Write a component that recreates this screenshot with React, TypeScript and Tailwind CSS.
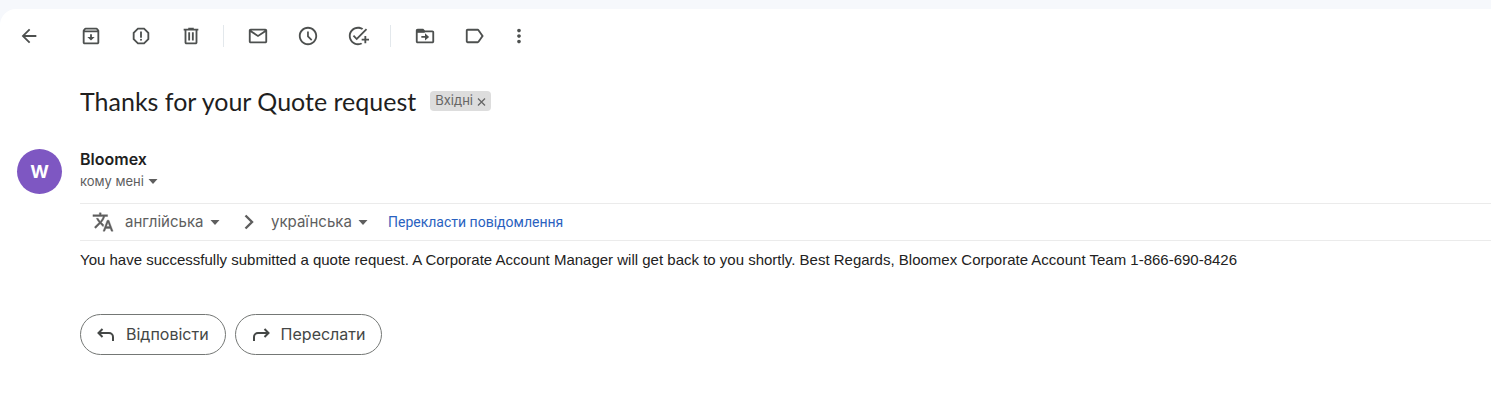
import type { ReactNode } from "react";

const Icon = ({
  children,
  className = "size-[22px]",
}: {
  children: ReactNode;
  className?: string;
}) => (
  <svg
    viewBox="0 0 24 24"
    fill="currentColor"
    aria-hidden="true"
    className={`shrink-0 ${className}`}
  >
    {children}
  </svg>
);

const ToolbarButton = ({
  label,
  children,
  className = "w-[50px]",
}: {
  label: string;
  children: ReactNode;
  className?: string;
}) => (
  <button
    type="button"
    aria-label={label}
    className={`flex h-10 items-center justify-center ${className}`}
  >
    <Icon>{children}</Icon>
  </button>
);

const Divider = () => <div className="ml-[7px] mr-[9px] h-[22px] w-px bg-[#e3e8ec]" />;

const Caret = ({ className = "" }: { className?: string }) => (
  <svg
    viewBox="0 0 10 5"
    fill="currentColor"
    aria-hidden="true"
    className={`h-[5px] w-[10px] shrink-0 ${className}`}
  >
    <path d="M0.5 0h9L5 5z" />
  </svg>
);

const Toolbar = () => (
  <div role="toolbar" className="flex h-[54px] items-center pl-1 text-[#4d504f]">
    <ToolbarButton label="Назад" className="mr-3 w-[50px]">
      <path d="M20 11H7.83l5.59-5.59L12 4l-8 8 8 8 1.41-1.41L7.83 13H20v-2z" />
    </ToolbarButton>
    <ToolbarButton label="Архівувати">
      <path d="M20.54 5.23l-1.39-1.68C18.88 3.21 18.47 3 18 3H6c-.47 0-.88.21-1.16.55L3.46 5.23C3.17 5.57 3 6.02 3 6.5V19c0 1.1.9 2 2 2h14c1.1 0 2-.9 2-2V6.5c0-.48-.17-.93-.46-1.27zM6.24 5h11.52l.83 1H5.42l.82-1zM5 19V8h14v11H5zm8-9h-2v3H8l4 4 4-4h-3z" />
    </ToolbarButton>
    <ToolbarButton label="Повідомити про спам">
      <path d="M15.73 3H8.27L3 8.27v7.46L8.27 21h7.46L21 15.73V8.27L15.73 3zM19 14.9L14.9 19H9.1L5 14.9V9.1L9.1 5h5.8L19 9.1v5.8z" />
      <circle cx="12" cy="16" r="1.1" />
      <path d="M11 7h2v7h-2z" />
    </ToolbarButton>
    <ToolbarButton label="Видалити">
      <path d="M15 4V3H9v1H4v2h1v13c0 1.1.9 2 2 2h10c1.1 0 2-.9 2-2V6h1V4h-5zm2 15H7V6h10v13zM9 8h2v9H9zm4 0h2v9h-2z" />
    </ToolbarButton>
    <Divider />
    <ToolbarButton label="Позначити як непрочитане">
      <path d="M20 4H4c-1.1 0-2 .9-2 2v12c0 1.1.9 2 2 2h16c1.1 0 2-.9 2-2V6c0-1.1-.9-2-2-2zm-.8 2L12 10.8 4.8 6h14.4zM4 18V7.87l8 5.33 8-5.33V18H4z" />
    </ToolbarButton>
    <ToolbarButton label="Відкласти">
      <path d="M11.99 2C6.47 2 2 6.48 2 12s4.47 10 9.99 10C17.52 22 22 17.52 22 12S17.52 2 11.99 2zM12 20c-4.42 0-8-3.58-8-8s3.58-8 8-8 8 3.58 8 8-3.58 8-8 8zm.9-13H11v5.8l4.4 4.4 1.3-1.3-3.8-3.8z" />
    </ToolbarButton>
    <ToolbarButton label="Додати до завдань">
      <path d="M22 5.18L10.59 16.6l-4.24-4.24 1.41-1.41 2.83 2.83 10-10L22 5.18zM12 20c-4.41 0-8-3.59-8-8s3.59-8 8-8c1.57 0 3.04.46 4.28 1.25l1.45-1.45C16.1 2.67 14.13 2 12 2 6.48 2 2 6.48 2 12s4.48 10 10 10c1.73 0 3.36-.44 4.78-1.22l-1.5-1.5c-1 .46-2.11.72-3.28.72zm7-5h-3v2h3v3h2v-3h3v-2h-3v-3h-2v3z" />
    </ToolbarButton>
    <Divider />
    <ToolbarButton label="Перемістити">
      <path d="M20 6h-8l-2-2H4c-1.1 0-2 .9-2 2v12c0 1.1.9 2 2 2h16c1.1 0 2-.9 2-2V8c0-1.1-.9-2-2-2zm0 12H4V8h16v10z" />
      <path d="M3 5h7l2 3.5H3zM12 17l4.5-4L12 9v3H8v2h4z" />
    </ToolbarButton>
    <ToolbarButton label="Мітки">
      <path d="M16.63 5.2C16.27 4.5 15.67 4.2 15 4.2H4c-1.1 0-2 .9-2 2v11.6c0 1.1.9 2 2 2h11c.67 0 1.27-.33 1.63-.9L21.5 12zM15 17.8H4V6.2h11l4 5.8z" />
    </ToolbarButton>
    <ToolbarButton label="Більше" className="w-[38px]">
      <path d="M12 8c1.1 0 2-.9 2-2s-.9-2-2-2-2 .9-2 2 .9 2 2 2zm0 2c-1.1 0-2 .9-2 2s.9 2 2 2 2-.9 2-2-.9-2-2-2zm0 6c-1.1 0-2 .9-2 2s.9 2 2 2 2-.9 2-2-.9-2-2-2z" />
    </ToolbarButton>
  </div>
);

const LanguageSelect = ({ label, value }: { label: string; value: string }) => (
  <div className="relative flex items-center">
    <select
      aria-label={label}
      className="h-6 appearance-none bg-transparent pr-4 text-[15px] leading-6"
    >
      <option>{value}</option>
    </select>
    <Caret className="pointer-events-none absolute right-0" />
  </div>
);

const TranslateBar = () => (
  <div className="flex h-[38px] items-center border-y border-[#ebebeb] pl-3 text-[#5e5e5e]">
    <Icon className="mr-[11px] size-[22px]">
      <path
        stroke="currentColor"
        strokeWidth="0.4"
        d="M12.87 15.07l-2.54-2.51.03-.03c1.74-1.94 2.98-4.17 3.71-6.53H17V4h-7V2H8v2H1v1.99h11.17C11.5 7.92 10.44 9.75 9 11.35 8.07 10.32 7.3 9.19 6.69 8h-2c.73 1.63 1.73 3.17 2.98 4.56l-5.09 5.02L4 19l5-5 3.11 3.11.76-2.04zM18.5 10h-2L12 22h2l1.12-3h4.75L21 22h2l-4.5-12zm-2.62 7l1.62-4.33L19.12 17h-3.24z"
      />
    </Icon>
    <LanguageSelect label="Мова оригіналу" value="англійська" />
    <svg
      viewBox="0 0 10 16"
      fill="none"
      stroke="currentColor"
      strokeWidth="2.4"
      aria-hidden="true"
      className="ml-6 mr-[17px] h-4 w-[10px] shrink-0"
    >
      <path d="M1.5 1.5L8 8l-6.5 6.5" />
    </svg>
    <LanguageSelect label="Мова перекладу" value="українська" />
    <a href="#translate" className="ml-5 font-[Roboto,sans-serif] text-sm text-[#2a62c0]">
      Перекласти повідомлення
    </a>
  </div>
);

const ReplyButton = ({ label, children }: { label: string; children: ReactNode }) => (
  <button
    type="button"
    className="flex h-[41px] items-center gap-[10px] rounded-full border border-[#747775] pb-0.5 pl-[15px] pr-4 text-base text-[#444746]"
  >
    <svg
      viewBox="0 0 20 20"
      fill="none"
      stroke="currentColor"
      strokeWidth="2"
      aria-hidden="true"
      className="size-5"
    >
      {children}
    </svg>
    {label}
  </button>
);

export default function App() {
  return (
    <div className="min-h-screen bg-[#f6f8fc] pt-[9px] font-[Inter,sans-serif]">
      <main className="min-h-[calc(100vh-9px)] rounded-tl-2xl bg-white">
        <Toolbar />
        <header className="flex items-center gap-[14px] pl-20 pt-[22px]">
          <h1 className="font-[Lato,sans-serif] text-[25px] font-normal leading-8 text-[#1f1f1f]">
            Thanks for your Quote request
          </h1>
          <span className="flex h-5 items-center gap-1 rounded bg-[#ddd] px-[5px] text-[13px] text-[#666]">
            Вхідні
            <button type="button" aria-label="Видалити мітку" className="flex">
              <svg
                viewBox="0 0 9 9"
                stroke="currentColor"
                strokeWidth="1.3"
                className="size-[9px]"
              >
                <path d="M1 1.5l7 7M8 1.5l-7 7" />
              </svg>
            </button>
          </span>
        </header>

        <section className="flex pl-[17px] pt-8">
          <div className="mr-[18px] flex size-[45px] shrink-0 items-center justify-center rounded-full bg-[#7e57c2] text-lg font-bold text-white">
            W
          </div>
          <div className="min-w-0 flex-1">
            <h2 className="text-base font-semibold leading-5 text-[#1f1f1f]">Bloomex</h2>
            <button type="button" className="flex items-center gap-1 text-[13px] leading-6 text-[#5e5e5e]">
              кому мені
              <Caret />
            </button>
            <div className="mt-[10px]">
              <TranslateBar />
            </div>
            <p className="mt-2 font-[Liberation_Sans,Arial,sans-serif] text-[15px] leading-[22px] text-[#222]">
              You have successfully submitted a quote request. A Corporate Account Manager will get
              back to you shortly. Best Regards, Bloomex Corporate Account Team 1-866-690-8426
            </p>
            <div className="mt-[43px] flex gap-[9px]">
              <ReplyButton label="Відповісти">
                <path d="M6.5 5L2.5 9l4 4M2.5 9H13a4 4 0 0 1 4 4v4" />
              </ReplyButton>
              <ReplyButton label="Переслати">
                <path d="M13.5 5l4 4-4 4M17.5 9H7a4 4 0 0 0-4 4v4" />
              </ReplyButton>
            </div>
          </div>
        </section>
      </main>
    </div>
  );
}
